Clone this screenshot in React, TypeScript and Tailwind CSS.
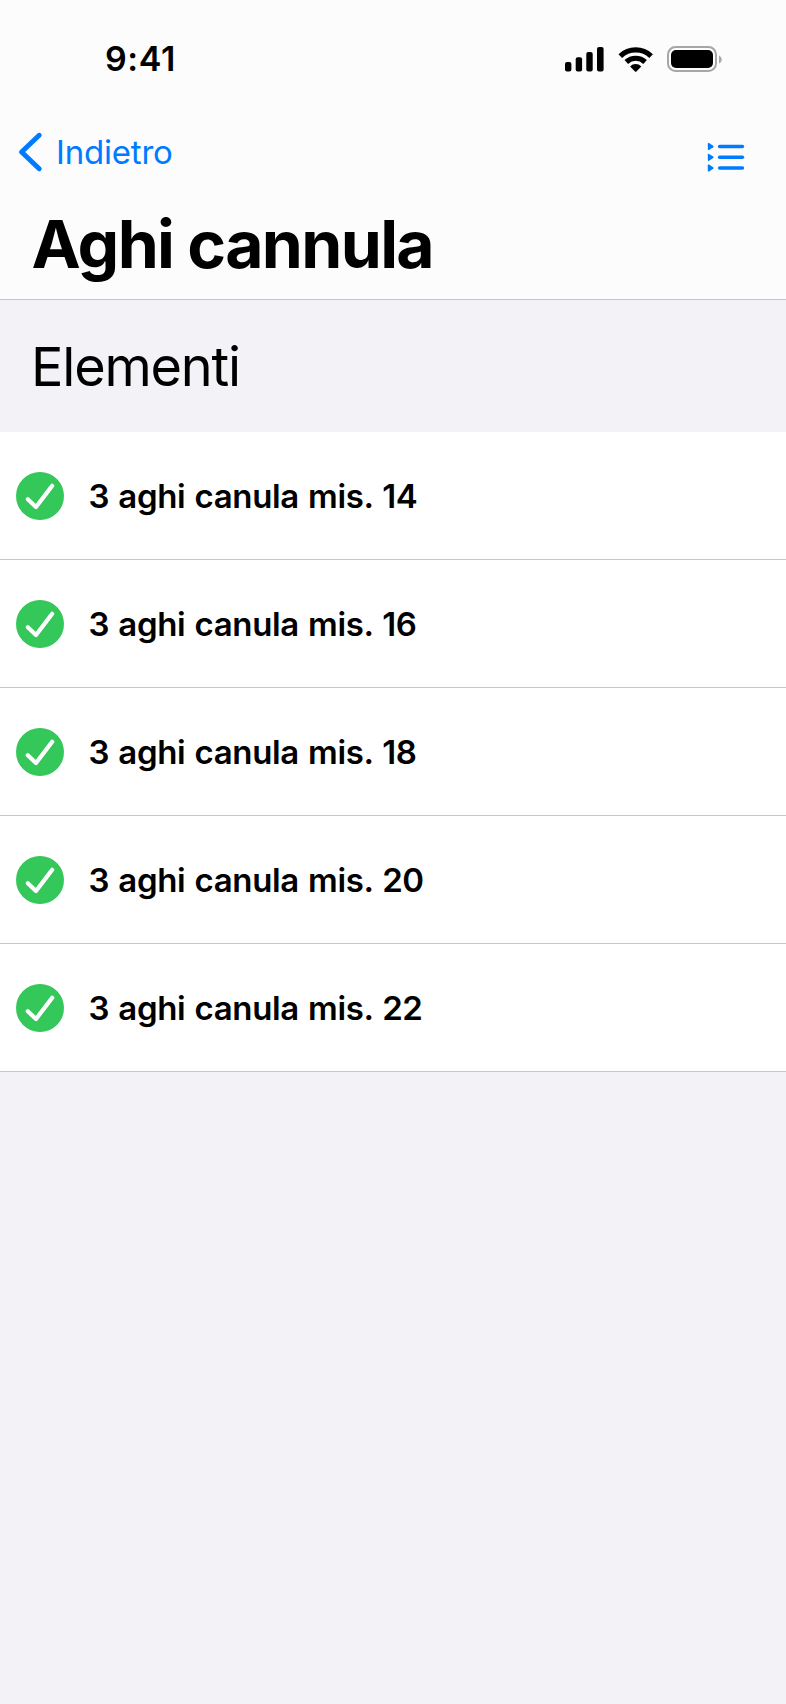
const items = [14, 16, 18, 20, 22].map((size) => `3 aghi canula mis. ${size}`);

function StatusIcons() {
  return (
    <svg width="160" height="32" viewBox="564 43 160 32" fill="none" aria-hidden="true">
      <g fill="#000">
        <rect x="565" y="62" width="6.4" height="9.6" rx="2" />
        <rect x="575.7" y="57.2" width="6.4" height="14.4" rx="2" />
        <rect x="586.3" y="52" width="6.4" height="19.6" rx="2" />
        <rect x="597" y="47" width="6.6" height="24.6" rx="2" />
      </g>
      <g stroke="#000" strokeWidth="5.2">
        <path d="M620.3 56.1 A22.3 22.3 0 0 1 651.1 56.1" />
        <path d="M626.3 62 A13.7 13.7 0 0 1 645.1 62" />
      </g>
      <path d="M630.1 66.4 A8 8 0 0 1 641.3 66.4 L636.4 71.5 Q635.7 72.1 635 71.5 Z" fill="#000" />
      <rect x="668" y="47" width="48" height="24" rx="7.5" stroke="#a6a6a6" strokeWidth="2" />
      <rect x="671" y="50" width="42" height="18" rx="5" fill="#000" />
      <path d="M719 55.4 Q721.8 56.8 721.8 59.4 Q721.8 62 719 63.4 Z" fill="#a6a6a6" />
    </svg>
  );
}

function ListIcon() {
  return (
    <svg width="40" height="30" viewBox="706 142 40 30" aria-hidden="true">
      {[146.5, 157.3, 168].map((y) => (
        <g key={y} transform={`translate(0 ${y})`}>
          <path d="M707.8 -2.8 Q707.8 -4 709 -3.4 L713.2 -0.8 Q714.2 0 713.2 0.8 L709 3.4 Q707.8 4 707.8 2.8 Z" fill="#007aff" />
          <path d="M719.6 0 H742.5" stroke="#007aff" strokeWidth="3.4" strokeLinecap="round" />
        </g>
      ))}
    </svg>
  );
}

function CheckBadge() {
  return (
    <svg width="48" height="48" viewBox="0 0 48 48" fill="none" aria-hidden="true">
      <circle cx="24" cy="24" r="24" fill="#34c759" />
      <path d="M11.8 27.2 L20 35 L36.2 13.8" stroke="#fff" strokeWidth="4.2" strokeLinecap="round" strokeLinejoin="round" />
    </svg>
  );
}

export default function App() {
  return (
    <div className="flex min-h-[1704px] w-full flex-col bg-[#f2f2f7] font-['Inter',sans-serif] text-black">
      <header className="flex h-[300px] flex-col border-b border-[#c6c6c8] bg-[#fcfcfc]">
        <div className="flex h-[118px] items-center justify-between pr-[62px] pl-[105px]">
          <span className="text-[34px] leading-none font-semibold tracking-[0.6px]">9:41</span>
          <StatusIcons />
        </div>
        <nav className="flex h-[68px] items-center justify-between pr-10 pl-[18px]">
          <button className="flex items-center text-[#007aff]">
            <svg width="26" height="42" viewBox="18 131 26 42" fill="none" aria-hidden="true">
              <path d="M39.2 135.3 L21.6 152 L39.2 168.7" stroke="#007aff" strokeWidth="5" strokeLinecap="round" strokeLinejoin="round" />
            </svg>
            <span className="pl-3 text-[33px] leading-none tracking-[-0.2px]">Indietro</span>
          </button>
          <button className="mt-[10px] flex">
            <ListIcon />
          </button>
        </nav>
        <h1 className="pt-[25px] pl-[31.5px] text-[66px] leading-none font-bold tracking-[-1.65px]">Aghi cannula</h1>
      </header>
      <h2 className="flex h-[132px] items-center pt-[2px] pl-[31px] text-[54px] leading-none font-normal tracking-[-1.2px]">Elementi</h2>
      <ul>
        {items.map((item) => (
          <li key={item} className="flex h-32 items-center border-b border-[#c6c6c8] bg-white pl-4">
            <CheckBadge />
            <span className="pt-[2px] pl-[24.5px] text-[33px] leading-none font-semibold tracking-[-0.35px] [word-spacing:1.2px]">{item}</span>
          </li>
        ))}
      </ul>
    </div>
  );
}
